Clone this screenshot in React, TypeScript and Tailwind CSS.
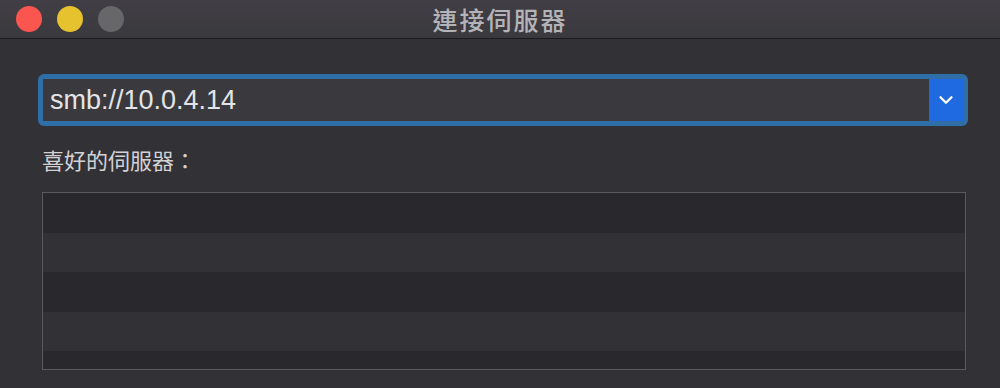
import { ChevronDown } from 'lucide-react';

const rows = [0, 1, 2, 3, 4];

export default function App() {
  return (
    <div
      className="w-[1000px] h-[388px] overflow-hidden flex flex-col bg-[#323136]"
      style={{ fontFamily: '"Noto Sans CJK TC", "Liberation Sans", sans-serif' }}
    >
      {/* title bar */}
      <div className="relative h-[39px] shrink-0 flex items-center justify-center bg-gradient-to-b from-[#413f45] to-[#3a393e] border-b border-[#1b1b1d]">
        <div className="absolute left-[16px] top-[6px] flex gap-[15px]">
          <span className="w-[26px] h-[26px] rounded-full bg-[#fb5550]" />
          <span className="w-[26px] h-[26px] rounded-full bg-[#e6c22e]" />
          <span className="w-[26px] h-[26px] rounded-full bg-[#676669]" />
        </div>
        <span className="text-[25px] leading-none font-medium text-[#b4b3b7] tracking-[2px]">連接伺服器</span>
      </div>

      <div className="flex flex-col pl-[38px] pr-[32px] pt-[35px]">
        {/* combo box */}
        <div className="h-[52px] rounded-[6px] bg-[#2f6ea6] p-[5px]">
          <div className="h-full flex bg-[#3a393d]">
            <div
              className="flex-1 flex items-center pl-[7px] pt-[1px] text-[27px] text-[#e4e4e6]"
              style={{ fontFamily: '"Liberation Sans", sans-serif' }}
            >
              smb://10.0.4.14
            </div>
            <div className="w-[34px] flex items-center justify-center bg-[#1f6ae0]">
              <ChevronDown className="w-[22px] h-[22px] text-white" strokeWidth={2.5} />
            </div>
          </div>
        </div>

        {/* favourites label */}
        <div className="mt-[22px] pl-[4px] text-[22px] leading-none text-[#d2d2d4]">喜好的伺服器：</div>

        {/* favourites list */}
        <div className="mt-[22px] ml-[4px] mr-[2px] h-[178px] border border-[#5a595d] overflow-hidden flex flex-col">
          {rows.map((i) => (
            <div
              key={i}
              className={`h-[39.5px] shrink-0 ${i % 2 === 0 ? 'bg-[#29282d]' : 'bg-[#323135]'}`}
            />
          ))}
        </div>
      </div>
    </div>
  );
}
